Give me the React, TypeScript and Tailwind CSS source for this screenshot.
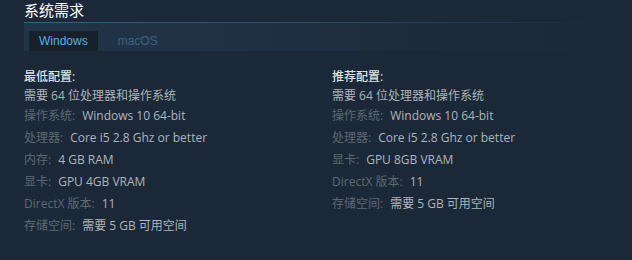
import { useState } from 'react';

type Row = { label?: string; value: string };

const minReq: Row[] = [
  { value: '需要 64 位处理器和操作系统' },
  { label: '操作系统', value: 'Windows 10 64-bit' },
  { label: '处理器', value: 'Core i5 2.8 Ghz or better' },
  { label: '内存', value: '4 GB RAM' },
  { label: '显卡', value: 'GPU 4GB VRAM' },
  { label: 'DirectX 版本', value: '11' },
  { label: '存储空间', value: '需要 5 GB 可用空间' },
];

const recReq: Row[] = [
  { value: '需要 64 位处理器和操作系统' },
  { label: '操作系统', value: 'Windows 10 64-bit' },
  { label: '处理器', value: 'Core i5 2.8 Ghz or better' },
  { label: '显卡', value: 'GPU 8GB VRAM' },
  { label: 'DirectX 版本', value: '11' },
  { label: '存储空间', value: '需要 5 GB 可用空间' },
];

const ReqColumn = ({ title, rows }: { title: string; rows: Row[] }) => {
  return (
    <div className="flex flex-col font-['Open_Sans','Noto_Sans_CJK_SC',sans-serif]">
      <div className="text-[12px] leading-[22px] text-[#dde1e4] font-medium">{title}:</div>
      <ul className="text-[12px] leading-[16px] text-[#b0b5ba]">
        {rows.map((r, i) => (
          <li key={i} className={i === 0 ? 'mb-[4px] whitespace-nowrap' : 'mb-[6px] whitespace-nowrap'}>
            {r.label && <span className="text-[#5f6972] pr-[7px]">{r.label}:</span>}
            {r.value}
          </li>
        ))}
      </ul>
    </div>
  );
};

export default function App() {
  const [tab, setTab] = useState('windows');

  return (
    <div className="w-[632px] h-[260px] bg-[#1b2838] pl-6 pr-6 overflow-hidden font-['Liberation_Sans','Noto_Sans_CJK_SC',sans-serif]">
      <div className="h-[22px] text-[15px] leading-[22px] text-white">系统需求</div>
      <div className="h-px bg-gradient-to-r from-[#2f6686] via-[#284e68] to-transparent" />
      <div className="h-[28px] bg-gradient-to-r from-[#213548] to-transparent flex items-end pl-[5px] gap-[10px]">
        <button
          onClick={() => setTab('windows')}
          className={`h-[20px] px-[10px] text-[12px] leading-[20px] ${
            tab === 'windows' ? 'bg-[#17212c] text-[#58b0ea]' : 'text-[#3a6384]'
          }`}
        >
          Windows
        </button>
        <button
          onClick={() => setTab('mac')}
          className={`h-[20px] px-[10px] text-[12px] leading-[20px] ${
            tab === 'mac' ? 'bg-[#17212c] text-[#58b0ea]' : 'text-[#3a6384]'
          }`}
        >
          macOS
        </button>
      </div>
      <div className="grid grid-cols-[308px_1fr] pt-[15px]">
        <ReqColumn title="最低配置" rows={minReq} />
        <ReqColumn title="推荐配置" rows={recReq} />
      </div>
    </div>
  );
}
